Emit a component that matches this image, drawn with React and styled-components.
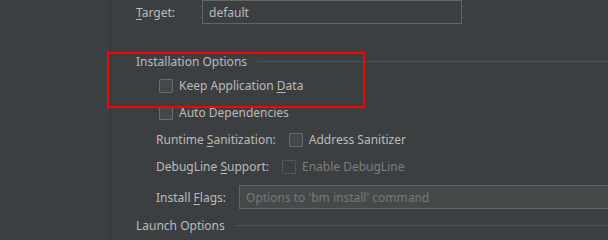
import styled, { createGlobalStyle } from 'styled-components'

const GlobalStyle = createGlobalStyle`
  body {
    margin: 0;
    background: #3c3f41;
    font-family: 'Noto Sans', 'Open Sans', sans-serif;
    font-size: 12px;
    color: #bbbbbb;
  }
`

const Page = styled.div`
  display: flex;
  width: 608px;
  height: 240px;
  overflow: hidden;
  position: relative;
`

const Sidebar = styled.div`
  width: 110px;
  flex-shrink: 0;
  border-right: 1px solid #333638;
`

const Main = styled.div`
  flex: 1;
  display: flex;
  flex-direction: column;
  padding-left: 25px;
  min-width: 0;
`

const FieldRow = styled.div`
  display: flex;
  align-items: center;
  height: ${(p) => p.$h || 24}px;
  margin-top: ${(p) => p.$mt || 0}px;
  padding-left: ${(p) => p.$indent || 0}px;
`

const Label = styled.span`
  width: ${(p) => (p.$w ? `${p.$w}px` : 'auto')};
  flex-shrink: 0;
  margin-right: ${(p) => (p.$w ? 0 : 13)}px;
  white-space: nowrap;
`

const Mn = styled.span`
  text-decoration: underline;
  text-underline-offset: 2px;
`

const TextField = styled.div`
  box-sizing: border-box;
  height: 24px;
  width: ${(p) => (p.$w ? `${p.$w}px` : 'auto')};
  flex: ${(p) => (p.$w ? 'none' : 1)};
  margin-right: ${(p) => (p.$w ? 0 : -4)}px;
  border: 1px solid #646464;
  background: ${(p) => (p.$filled ? '#45494a' : '#3c3f41')};
  color: ${(p) => (p.$placeholder ? '#787878' : '#bbbbbb')};
  display: flex;
  align-items: center;
  padding-left: 6px;
  white-space: nowrap;
  overflow: hidden;
`

const Section = styled.div`
  display: flex;
  align-items: center;
  height: 20px;
  margin-top: ${(p) => p.$mt || 0}px;
  white-space: nowrap;

  &::after {
    content: '';
    flex: 1;
    height: 1px;
    background: #515151;
    margin-left: 10px;
  }
`

const Box = styled.span`
  box-sizing: border-box;
  width: 14px;
  height: 14px;
  flex-shrink: 0;
  border: 1px solid ${(p) => (p.$disabled ? '#555859' : '#6b6b6b')};
  background: ${(p) => (p.$disabled ? '#3c3f41' : '#43494a')};
  border-radius: 1px;
  margin-right: 6px;
`

const CheckText = styled.span`
  color: ${(p) => (p.$disabled ? '#7b7d7e' : '#bbbbbb')};
  white-space: nowrap;
`

const Highlight = styled.div`
  position: absolute;
  left: 107px;
  top: 52px;
  width: 258px;
  height: 56px;
  box-sizing: border-box;
  border: 2px solid #ff0000;
  pointer-events: none;
`

const Check = ({ children, disabled }) => (
  <>
    <Box $disabled={disabled} />
    <CheckText $disabled={disabled}>{children}</CheckText>
  </>
)

export default function App() {
  return (
    <>
      <GlobalStyle />
      <Page>
        <Sidebar />
        <Main>
          <FieldRow>
            <Label $w={66}>
              <Mn>T</Mn>arget:
            </Label>
            <TextField $w={260}>default</TextField>
          </FieldRow>

          <Section $mt={27}>Installation Options</Section>

          <FieldRow $h={27} $mt={1} $indent={23}>
            <Check>
              Keep Application <Mn>D</Mn>ata
            </Check>
          </FieldRow>
          <FieldRow $h={27} $indent={23}>
            <Check>Auto Dependencies</Check>
          </FieldRow>
          <FieldRow $h={27} $indent={20}>
            <Label>
              Runtime <Mn>S</Mn>anitization:
            </Label>
            <Check>Address Sanitizer</Check>
          </FieldRow>
          <FieldRow $h={27} $indent={20}>
            <Label>
              DebugLine <Mn>S</Mn>upport:
            </Label>
            <Check disabled>Enable DebugLine</Check>
          </FieldRow>
          <FieldRow $h={30} $mt={2} $indent={20}>
            <Label>
              Install <Mn>F</Mn>lags:
            </Label>
            <TextField $filled $placeholder>
              Options to 'bm install' command
            </TextField>
          </FieldRow>

          <Section $mt={3}>Launch Options</Section>
        </Main>
        <Highlight />
      </Page>
    </>
  )
}
